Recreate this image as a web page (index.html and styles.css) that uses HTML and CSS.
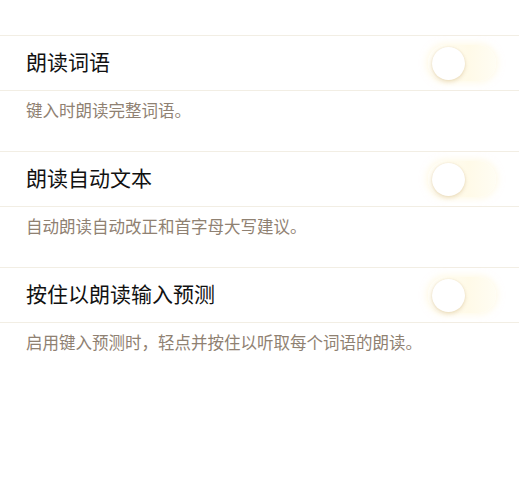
FILE: index.html
```html
<!DOCTYPE html>
<html lang="zh">
<head>
<meta charset="utf-8">
<link rel="stylesheet" href="styles.css">
</head>
<body>
<div class="page">
  <section class="group">
    <div class="row">
      <span class="title">朗读词语</span>
      <span class="toggle"><span class="knob"></span></span>
    </div>
    <p class="desc">键入时朗读完整词语。</p>
  </section>
  <section class="group">
    <div class="row">
      <span class="title">朗读自动文本</span>
      <span class="toggle"><span class="knob"></span></span>
    </div>
    <p class="desc">自动朗读自动改正和首字母大写建议。</p>
  </section>
  <section class="group">
    <div class="row">
      <span class="title">按住以朗读输入预测</span>
      <span class="toggle"><span class="knob"></span></span>
    </div>
    <p class="desc">启用键入预测时，轻点并按住以听取每个词语的朗读。</p>
  </section>
</div>
</body>
</html>
```
FILE: styles.css
```css
html, body {
  margin: 0;
  padding: 0;
  background: #ffffff;
}
body {
  font-family: "Noto Sans CJK SC", "Noto Sans", sans-serif;
  width: 519px;
  height: 500px;
  overflow: hidden;
}
.page {
  display: flex;
  flex-direction: column;
  padding-top: 35px;
}
.group {
  display: flex;
  flex-direction: column;
}
.row {
  height: 56px;
  box-sizing: border-box;
  border-top: 1px solid #f2eee4;
  border-bottom: 1px solid #f2eee4;
  display: flex;
  align-items: center;
  justify-content: space-between;
  padding: 0 23px 0 26px;
}
.title {
  font-size: 21px;
  color: #111111;
  line-height: 1;
  margin-top: -4px;
}
.toggle {
  width: 68px;
  height: 36px;
  border-radius: 18px;
  background: linear-gradient(90deg, #fffdf6 0%, #fffae8 60%, #fffdf3 100%);
  box-shadow: 0 0 6px 2px rgba(255, 245, 210, 0.5);
  display: flex;
  align-items: center;
  padding-left: 4px;
  box-sizing: border-box;
}
.knob {
  width: 33px;
  height: 33px;
  border-radius: 50%;
  background: #ffffff;
  box-shadow: 0 2px 4px rgba(215, 190, 140, 0.45), 0 0 2px rgba(220, 200, 160, 0.4);
}
.desc {
  margin: 0;
  height: 60px;
  padding: 8px 26px 0;
  box-sizing: border-box;
  font-size: 16.5px;
  line-height: 22px;
  color: #8f8172;
}
```
